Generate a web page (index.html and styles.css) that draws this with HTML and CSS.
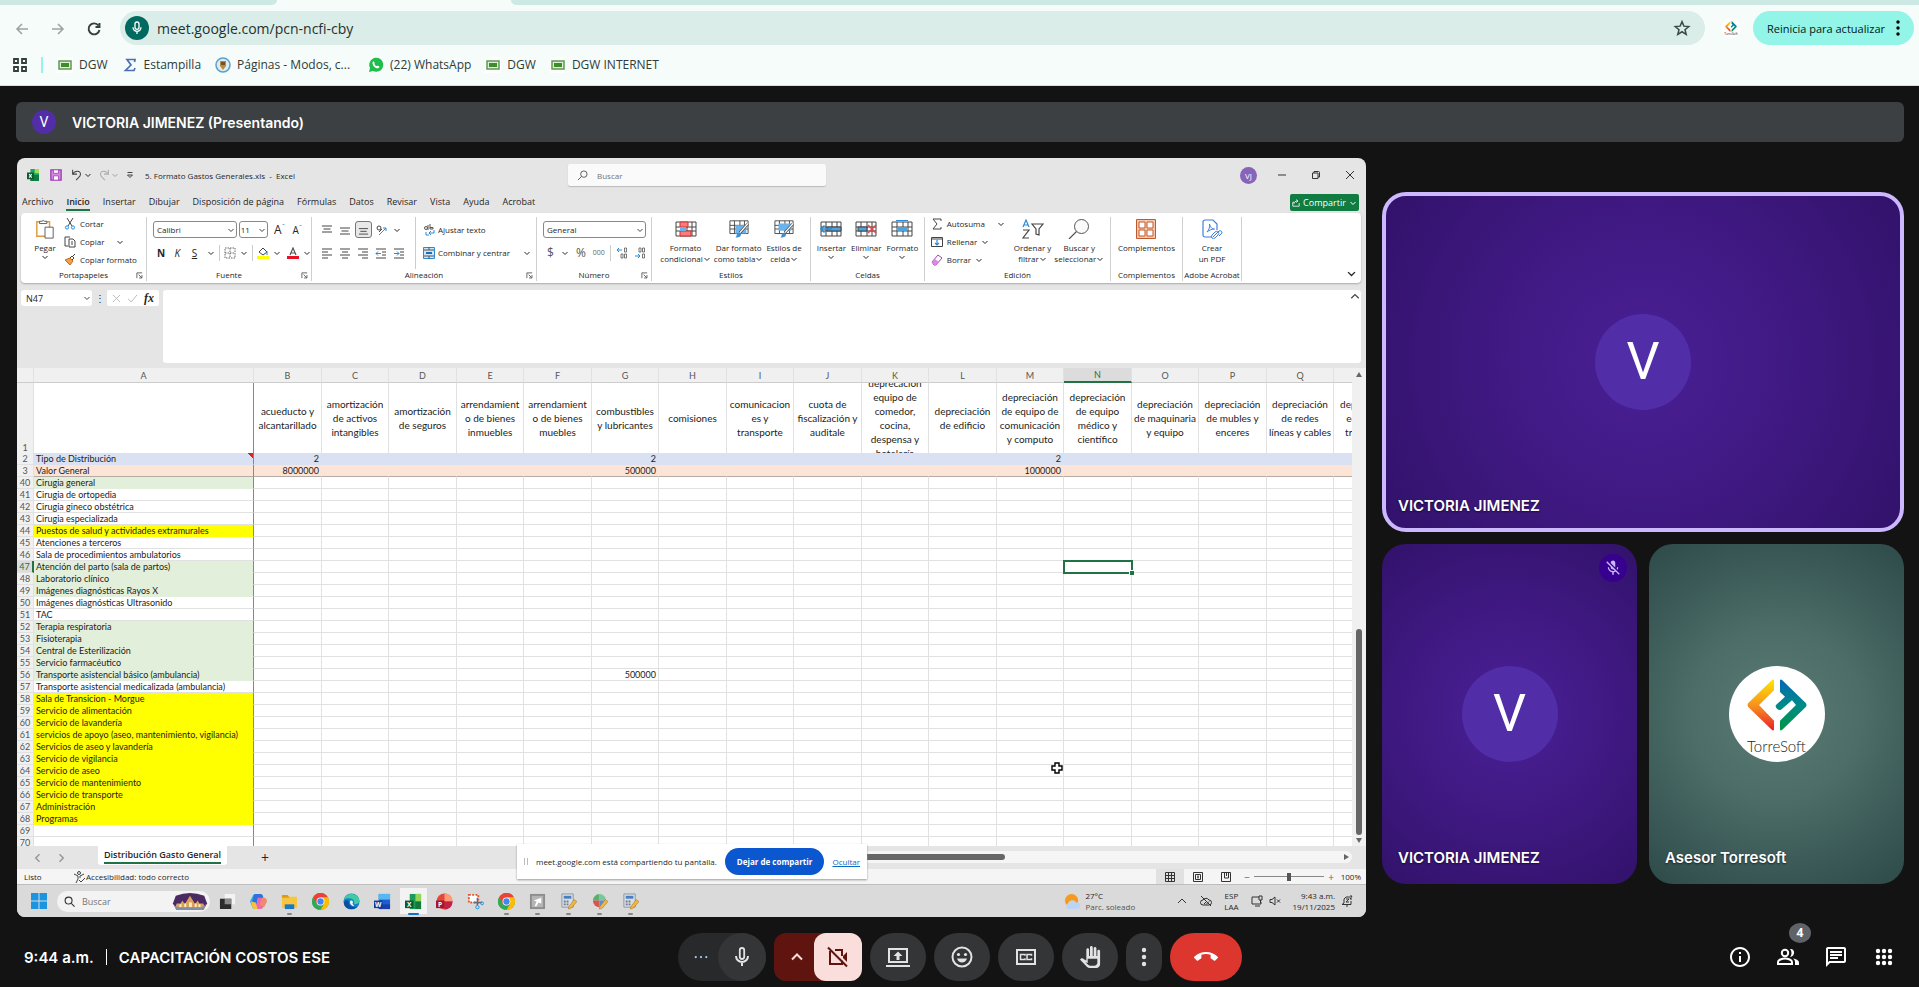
FILE: index.html
```html
<!DOCTYPE html>
<html lang="es">
<head>
  <meta charset="UTF-8">
  <meta name="viewport" content="width=device-width, initial-scale=1.0">
  <title>Meet - CAPACITACIÓN COSTOS ESE</title>
  <link rel="stylesheet" href="styles.css">
</head>
<body>
  <!-- Shared icons -->
  <svg class="sprite" aria-hidden="true">
    <symbol id="chev" viewBox="0 0 8 8"><path d="M1.500 3l2.500 2.500L6.500 3" fill="none" stroke="currentColor" stroke-width="1"/></symbol>
    <symbol id="launch" viewBox="0 0 8 8"><path d="M1 7V1h6M3 3l3.500 3.500M6.800 3.500v3.300H3.500" fill="none" stroke="#555" stroke-width="1"/></symbol>
    <symbol id="dgw" viewBox="0 0 16 16"><path fill="#fff" d="M0 0h16v16H0z"/><path d="M2 4h12v8H2z" fill="#dfeeda" stroke="#5c9a4c" stroke-width="1.500"/><path fill="#3f8a2f" d="M4 6h8v4H4z"/></symbol>
    <symbol id="chrome" viewBox="0 0 24 24"><circle cx="12" cy="12" r="12" fill="#34a853"/><path d="M12 12L1.600 6A12 12 0 0 1 22.400 6z" fill="#ea4335"/><path d="M12 6h10.400A12 12 0 0 1 12 24l5.200-9z" fill="#fbbc04"/><path d="M1.600 6L6.800 15l5.200-3V6z" fill="#ea4335"/><path d="M1.600 6l5.200 9 5.200 3-2 5.900A12 12 0 0 1 1.600 6z" fill="#34a853"/><circle cx="12" cy="12" r="5.600" fill="#fff"/><circle cx="12" cy="12" r="4.500" fill="#4285f4"/></symbol>
    <symbol id="torre" viewBox="0 0 60 56" preserveAspectRatio="none"><path d="M27 2q0-2-2-1L1 26q-1 2 0 4l24 25q2 1 2-1V45L12 28l15-16z" fill="url(#warm)"/><path d="M33 2q0-2 2-1l24 25q1 2 0 4L35 55q-2 1-2-1V45l16-17-4-5-11 10q-2 1-4-1-2-2-1-4l9-9-5-5z" fill="url(#cool)"/></symbol>
    <symbol id="sheetpen" viewBox="0 0 18 18"><path d="M2 1h12v14H2z" fill="#d9dde2" stroke="#8a97a8"/><path d="M4 3h8v3H4z" fill="#4a7ec2"/><path d="M4 8h2v2H4zm3 0h2v2H7zm-3 3h2v2H4zm3 0h2v2H7z" fill="#6f7d8e"/><path d="M9 15l6-8 3 2-6 7-3 1z" fill="#f0b740" stroke="#a9781d" stroke-width=".6"/></symbol>
    <symbol id="cells" viewBox="0 0 22 18"><path d="M1 2h20v14H1zM1 7h20M1 11h20M6 2v14M12 2v14M17 2v14" fill="#fff" stroke="#444" stroke-width="1"/></symbol>
    <linearGradient id="warm" x1="0" y1="0" x2="0" y2="1"><stop offset="0" stop-color="#ffe600"/><stop offset=".5" stop-color="#f7931e"/><stop offset="1" stop-color="#e9202b"/></linearGradient>
    <linearGradient id="cool" x1="0" y1="0" x2="0" y2="1"><stop offset="0" stop-color="#0068b5"/><stop offset=".5" stop-color="#008a8a"/><stop offset="1" stop-color="#00963f"/></linearGradient>
  </svg>

  <header class="browser">
    <div class="tab-strip"><span class="tab-left"></span><span class="tab-active"></span><span class="tab-right"></span></div>
    <div class="toolbar">
      <button class="nav-btn dim" aria-label="Atrás"><svg viewBox="0 0 16 16"><path d="M14 8H3M8 3L3 8l5 5"/></svg></button>
      <button class="nav-btn dim" aria-label="Adelante"><svg viewBox="0 0 16 16"><path d="M2 8h11M8 3l5 5-5 5"/></svg></button>
      <button class="nav-btn last" aria-label="Recargar"><svg viewBox="0 0 16 16"><path d="M12.500 4.500A5.500 5.500 0 1 0 13.500 9M13.500 2v4H9.500" stroke-width="1.900"/></svg></button>
      <div class="address">
        <span class="mic-chip"><svg viewBox="0 0 24 24"><rect x="9" y="3" width="6" height="11" rx="3"/><path d="M6 11a6 6 0 0 0 12 0M12 17v4"/></svg></span>
        <input type="text" aria-label="Dirección" value="meet.google.com/pcn-ncfi-cby">
        <button class="star" aria-label="Marcador"><svg viewBox="0 0 24 24"><path d="M12 3.500l2.500 6 6.500.5-5 4.200 1.600 6.300L12 17l-5.600 3.500L8 14.200 3 10l6.500-.5z" fill="none" stroke="#3b4a47" stroke-width="2"/></svg></button>
      </div>
      <span class="profile"><svg viewBox="0 0 60 56"><use href="#torre"/></svg><small>TorreSoft</small></span>
      <button class="update-btn">Reinicia para actualizar
        <svg viewBox="0 0 4 16"><circle cx="2" cy="2" r="1.700"/><circle cx="2" cy="8" r="1.700"/><circle cx="2" cy="14" r="1.700"/></svg>
      </button>
    </div>
    <nav class="bookmarks">
      <svg class="apps" viewBox="0 0 14 14"><path d="M1 1h4v4H1zM9 1h4v4H9zM1 9h4v4H1zM9 9h4v4H9z" fill="none" stroke="#333f3d" stroke-width="1.800"/></svg>
      <span class="divider"></span>
      <a href="#"><svg><use href="#dgw"/></svg>DGW</a>
      <a href="#"><svg viewBox="0 0 16 16"><path d="M12.500 5L13 2.500H5L9 8l-5.500 5.500h8.500l1-2.500" fill="none" stroke="#4a6fb5" stroke-width="1.700"/></svg>Estampilla</a>
      <a href="#"><svg viewBox="0 0 16 16"><circle cx="8" cy="8" r="7" fill="#dcecf5" stroke="#5b9fcb" stroke-width="1.500"/><path d="M5 4h6v5l-3 4-3-4z" fill="#b98a3a"/><path d="M6 5h4v3H6z" fill="#6f5424"/></svg>Páginas - Modos, c...</a>
      <a href="#" class="wide"><svg viewBox="0 0 16 16"><path d="M1 15l1-4a7 7 0 1 1 3 3z" fill="#1fbe4c"/><path d="M5 4.500c2 0 1.500 2 1.500 2.500s1.500 2.500 2.500 2c.8-.5 1.500-.5 2.500.8-1 2.400-3.500 1.600-5 .2S3.800 5.500 5 4.500z" fill="#fff"/></svg>(22) WhatsApp</a>
      <a href="#"><svg><use href="#dgw"/></svg>DGW</a>
      <a href="#"><svg><use href="#dgw"/></svg>DGW INTERNET</a>
    </nav>
  </header>

  <main class="meet">
    <div class="presenter"><span class="mini-avatar">V</span>VICTORIA JIMENEZ (Presentando)</div>

    <div class="stage">
      <section class="share">
        <!-- Excel title bar -->
        <div class="xl-title">
          <div class="quick">
            <svg class="i12" viewBox="0 0 14 14"><path d="M4 0h10v14H4z" fill="#21a366"/><path d="M9 0h5v5H9z" fill="#9be05c"/><path d="M4 7h10v7H4z" fill="#107c41"/><path d="M0 4h8v8H0z" fill="#0b5c30"/><path d="M2.500 6l3 4M5.500 6l-3 4" stroke="#fff" stroke-width="1.200"/></svg>
            <svg class="i12 save" viewBox="0 0 14 14"><path d="M1 1h12v12H1z" fill="#d58be0" stroke="#a33fb5" stroke-width="1.600"/><path d="M4 1h6v4H4zM4 8h6v5H4z" fill="#fff" stroke="#a33fb5"/></svg>
            <svg class="i14" viewBox="0 0 16 16"><path d="M3 2v5h5M3 7c2-4 9-5 9 0 0 3-3 4-5 7" fill="none" stroke="#444" stroke-width="1.200"/></svg>
            <svg class="i8"><use href="#chev"/></svg>
            <svg class="i14 faded redo" viewBox="0 0 16 16"><path d="M13 2v5H8M13 7C11 3 4 2 4 7c0 3 3 4 5 7" fill="none" stroke="#444" stroke-width="1.200"/></svg>
            <svg class="i8 faded"><use href="#chev"/></svg>
            <svg class="i8 drop" viewBox="0 0 8 8"><path d="M1.500 1.500h5M1.500 4L4 6.500 6.500 4z" fill="none" stroke="#444"/></svg>
            <span>5. Formato Gastos Generales.xls &nbsp;-&nbsp; Excel</span>
          </div>
          <label class="xl-search"><svg viewBox="0 0 12 12"><circle cx="7.500" cy="4.500" r="3.500"/><path d="M5 7l-4 4"/></svg><input type="text" placeholder="Buscar" aria-label="Buscar en Excel"></label>
          <div class="win-btns">
            <span class="vj">VJ</span>
            <button aria-label="Minimizar"><svg viewBox="0 0 10 10"><path d="M1 5h8"/></svg></button>
            <button aria-label="Restaurar"><svg viewBox="0 0 10 10"><path d="M1.500 3h5.500v5.500H1.500zM3 3V1.500h4.500c.6 0 1 .4 1 1V7H7"/></svg></button>
            <button aria-label="Cerrar"><svg viewBox="0 0 10 10"><path d="M1 1l8 8M9 1L1 9"/></svg></button>
          </div>
        </div>

        <nav class="xl-tabs">
          <a href="#">Archivo</a><a href="#" class="on">Inicio</a><a href="#">Insertar</a><a href="#">Dibujar</a><a href="#">Disposición de página</a><a href="#">Fórmulas</a><a href="#">Datos</a><a href="#">Revisar</a><a href="#">Vista</a><a href="#">Ayuda</a><a href="#">Acrobat</a>
          <button class="share-btn"><svg viewBox="0 0 10 10"><path d="M3 4H1v5h8V5M2.500 6c0-2 2-3.500 4-3.500M5 .8l2.500 1.700L5.500 4.500" fill="none" stroke="#fff"/></svg>Compartir<svg><use href="#chev"/></svg></button>
        </nav>

        <!-- Ribbon -->
        <div class="ribbon">
          <div class="group g-clip">
            <div class="body">
              <button class="big"><svg viewBox="0 0 20 22"><path d="M1 3h14v16H1z" fill="#fff" stroke="#dc9b3d" stroke-width="1.600"/><path d="M4 5V2.500h2.500a2 2 0 0 1 3 0H12V5z" fill="#fff" stroke="#555"/><path d="M10 9h9v12h-9z" fill="#fff" stroke="#555"/></svg>Pegar<svg class="i8"><use href="#chev"/></svg></button>
              <div class="lines">
                <button><svg class="i12" viewBox="0 0 12 12"><path d="M3 0l5 8M9 0L4 8" stroke="#444" fill="none"/><circle cx="3" cy="9.500" r="1.600" fill="none" stroke="#2b8bd6"/><circle cx="9" cy="9.500" r="1.600" fill="none" stroke="#2b8bd6"/></svg>Cortar</button>
                <button><svg class="i12" viewBox="0 0 12 12"><path d="M4 10H1V1h5M5 3h4l2 2v6H5zM7 6h2M7 8h2" stroke="#444" fill="none"/></svg>Copiar<svg class="i8 push"><use href="#chev"/></svg></button>
                <button><svg class="i12" viewBox="0 0 12 12"><path d="M1 6l5-2 3 3-3 4z" fill="#f0a04b" stroke="#c96a12"/><path d="M6 4l2-2 2 2-2 2M9 2l2-2" stroke="#444" fill="none"/></svg>Copiar formato</button>
              </div>
            </div>
            <div class="cap">Portapapeles<svg><use href="#launch"/></svg></div>
          </div>

          <div class="group g-font">
            <div class="body rows">
              <div class="row">
                <select class="w86" aria-label="Fuente"><option>Calibri</option></select>
                <select class="w30" aria-label="Tamaño"><option>11</option></select>
                <span class="fmt big-a">A<sup>ˆ</sup></span><span class="fmt">A<sup>ˇ</sup></span>
              </div>
              <div class="row marks">
                <b>N</b><i>K</i><u>S</u><svg class="i8"><use href="#chev"/></svg><span class="vr"></span>
                <svg class="i12" viewBox="0 0 12 12"><path d="M1 1h10v10H1zM6 1v10M1 6h10" fill="none" stroke="#666" stroke-dasharray="1.500 1"/></svg><svg class="i8"><use href="#chev"/></svg><span class="vr"></span>
                <svg class="i12" viewBox="0 0 12 12"><path d="M2 5l4-4 4 4-4 3z" fill="#fff" stroke="#444"/><path d="M10 4v4" stroke="#2b8bd6"/><path d="M0 9h12v3H0z" fill="#ff0"/></svg><svg class="i8"><use href="#chev"/></svg>
                <svg class="i12" viewBox="0 0 12 12"><path d="M3 8l3-7 3 7M4 6h4" fill="none" stroke="#555" stroke-width="1.200"/><path d="M0 9h12v3H0z" fill="#e81123"/></svg><svg class="i8"><use href="#chev"/></svg>
              </div>
            </div>
            <div class="cap">Fuente<svg><use href="#launch"/></svg></div>
          </div>

          <div class="group g-align">
            <div class="body">
              <div class="rows">
                <div class="row icons">
                  <svg viewBox="0 0 12 12"><path d="M1 2h10M2.500 5h7M1 8h10"/></svg><svg viewBox="0 0 12 12"><path d="M1 4h10M2.500 7h7M1 10h10"/></svg><svg class="boxed" viewBox="0 0 12 12"><path d="M1 5h10M2.500 8h7M1 11h10"/></svg>
                  <svg viewBox="0 0 12 12"><circle cx="4" cy="4" r="2"/><path d="M4 8l3-3"/><path d="M4 11l7-7M8 4h3v3" class="blue"/></svg><svg class="i8"><use href="#chev"/></svg>
                </div>
                <div class="row icons">
                  <svg viewBox="0 0 12 12"><path d="M1 2h10M1 5h6M1 8h10M1 11h6"/></svg><svg viewBox="0 0 12 12"><path d="M1 2h10M3 5h6M1 8h10M3 11h6"/></svg><svg viewBox="0 0 12 12"><path d="M1 2h10M5 5h6M1 8h10M5 11h6"/></svg>
                  <svg viewBox="0 0 12 12"><path d="M1 2h10M7 5h4M7 8h4M1 11h10"/><path d="M6 6.500H1M3 4.500l-2 2 2 2" class="blue"/></svg><svg viewBox="0 0 12 12"><path d="M1 2h10M7 5h4M7 8h4M1 11h10"/><path d="M1 6.500h5M4 4.500l2 2-2 2" class="blue"/></svg>
                </div>
              </div>
              <div class="rows wrap-col">
                <button><svg class="i12" viewBox="0 0 12 12"><circle cx="3" cy="4" r="1.500" fill="none" stroke="#555"/><path d="M5 1v5M7 0v5M7 3.500h3V5H7" fill="none" stroke="#555"/><path d="M3 8v3h3M11 6v3H6M8 7L6 9l2 2" fill="none" stroke="#2b8bd6"/></svg>Ajustar texto</button>
                <button><svg class="i12" viewBox="0 0 12 12"><path d="M.5.500h11v11H.5z" fill="#cfe6f8" stroke="#2b8bd6"/><path d="M1 3h10M1 9h10M6 0v3M6 9v3" stroke="#555"/><path d="M3 6h6" stroke="#176fb8" stroke-width="2"/></svg>Combinar y centrar<svg class="i8 push"><use href="#chev"/></svg></button>
              </div>
            </div>
            <div class="cap">Alineación<svg><use href="#launch"/></svg></div>
          </div>

          <div class="group g-num">
            <div class="body rows">
              <div class="row"><select class="w103" aria-label="Formato de número"><option>General</option></select></div>
              <div class="row nums">
                <span class="sym">$</span><svg class="i8"><use href="#chev"/></svg><span class="sym">%</span><span class="zeros">000</span><span class="vr"></span>
                <svg class="i12" viewBox="0 0 12 12"><path d="M6 3H1M3 1L1 3l2 2" fill="none" stroke="#2b8bd6"/><path d="M8.500 1h2v4h-2zM5 7h2v4H5zM8.500 7h2v4h-2z" fill="none" stroke="#555" stroke-width=".8"/></svg>
                <svg class="i12" viewBox="0 0 12 12"><path d="M1 9h5M4 7l2 2-2 2" fill="none" stroke="#2b8bd6"/><path d="M5 1h2v4H5zM8.500 1h2v4h-2zM8.500 7h2v4h-2z" fill="none" stroke="#555" stroke-width=".8"/></svg>
              </div>
            </div>
            <div class="cap">Número<svg><use href="#launch"/></svg></div>
          </div>

          <div class="group g-style">
            <div class="body">
              <button class="big"><svg viewBox="0 0 22 18"><use href="#cells"/><path d="M5 2h8v5H5zM5 11h11v5H5z" fill="#ff7a7a" stroke="#c33"/><path d="M5 7h6v4H5z" fill="#6bb3ea"/></svg>Formato<span>condicional<svg class="i8"><use href="#chev"/></svg></span></button>
              <button class="big"><svg viewBox="0 0 22 22"><use href="#cells" height="18"/><path d="M7 7h12v9H7z" fill="#6bb3ea"/><path d="M21 5l-9 10" stroke="#444" stroke-width="3"/><path d="M21 5l-9 10" stroke="#fff" stroke-width="1.500"/><path d="M7 20c4 1 7-1 6-4l-3-1c-2 1-1 4-3 5z" fill="#3f8fd0"/></svg>Dar formato<span>como tabla<svg class="i8"><use href="#chev"/></svg></span></button>
              <button class="big"><svg viewBox="0 0 22 22"><use href="#cells" height="18"/><path d="M5 5h14v8H5z" fill="#6bb3ea"/><path d="M21 5l-9 10" stroke="#444" stroke-width="3"/><path d="M21 5l-9 10" stroke="#fff" stroke-width="1.500"/><path d="M7 20c4 1 7-1 6-4l-3-1c-2 1-1 4-3 5z" fill="#3f8fd0"/></svg>Estilos de<span>celda<svg class="i8"><use href="#chev"/></svg></span></button>
            </div>
            <div class="cap">Estilos</div>
          </div>

          <div class="group g-cell">
            <div class="body">
              <button class="big"><svg viewBox="0 0 22 18"><use href="#cells"/><path d="M7 7h14v4H7z" fill="#4da3e0" stroke="#444"/><path d="M12 9H1M4.500 5.500L1 9l3.500 3.500" fill="none" stroke="#2b8bd6" stroke-width="1.500"/></svg>Insertar<svg class="i8"><use href="#chev"/></svg></button>
              <button class="big"><svg viewBox="0 0 22 18"><use href="#cells"/><path d="M3 7h9v4H3z" fill="#4da3e0" stroke="#444"/><path d="M13 5l8 8M21 5l-8 8" stroke="#e0474c" stroke-width="1.600"/></svg>Eliminar<svg class="i8"><use href="#chev"/></svg></button>
              <button class="big"><svg viewBox="0 0 22 18"><use href="#cells"/><path d="M6 7h10v4H6z" fill="#4da3e0"/><path d="M5 .5h12" stroke="#2b8bd6"/></svg>Formato<svg class="i8"><use href="#chev"/></svg></button>
            </div>
            <div class="cap">Celdas</div>
          </div>

          <div class="group g-edit">
            <div class="body">
              <div class="lines">
                <button><svg class="i12" viewBox="0 0 12 12"><path d="M10 3V1H2l4 5-4 5h8V9" fill="none" stroke="#444"/></svg>Autosuma<svg class="i8 push"><use href="#chev"/></svg></button>
                <button><svg class="i12" viewBox="0 0 12 12"><path d="M.5 1.500h11v9H.5zM.5 3h11" fill="none" stroke="#444"/><path d="M6 4v5M4 7l2 2 2-2" fill="none" stroke="#2b8bd6" stroke-width="1.200"/></svg>Rellenar<svg class="i8"><use href="#chev"/></svg></button>
                <button><svg class="i12" viewBox="0 0 12 12"><path d="M1 8l6-7 4 3-6 7H3z" fill="#fff" stroke="#a33fb5"/><path d="M1 8l3-3 4 3-3 3H3z" fill="#d58be0"/></svg>Borrar<svg class="i8"><use href="#chev"/></svg></button>
              </div>
              <button class="big"><svg viewBox="0 0 22 20"><path d="M1 8l3-7 3 7M2 6h4" fill="none" stroke="#2b8bd6" stroke-width="1.200"/><path d="M1 11h6l-6 8h6M10 5h11l-4 5v6l-3-1v-5z" fill="none" stroke="#444" stroke-width="1.200"/></svg>Ordenar y<span>filtrar<svg class="i8"><use href="#chev"/></svg></span></button>
              <button class="big"><svg viewBox="0 0 22 20"><circle cx="13.500" cy="7.500" r="7" fill="#fafafa" stroke="#555"/><path d="M8.500 12.500L1 20" stroke="#555" stroke-width="1.200"/></svg>Buscar y<span>seleccionar<svg class="i8"><use href="#chev"/></svg></span></button>
            </div>
            <div class="cap">Edición</div>
          </div>

          <div class="group g-add">
            <div class="body"><button class="big"><svg viewBox="0 0 22 20"><path d="M1.500.5h19v19h-19z" fill="#f8c9b0" stroke="#c2582c"/><path d="M4 3h6v6H4zM12 3h6v6h-6zM4 11h6v6H4zM12 11h6v6h-6z" fill="#fff" stroke="#c2582c"/></svg>Complementos</button></div>
            <div class="cap">Complementos</div>
          </div>

          <div class="group g-pdf">
            <div class="body"><button class="big"><svg viewBox="0 0 22 20"><path d="M11 18H4a2 2 0 0 1-2-2V3a2 2 0 0 1 2-2h8l4 4v6" fill="none" stroke="#3f7fe0" stroke-width="1.200"/><path d="M6 13c2-2 3-5 2.500-8 1 4 3 5 5 5-3 0-5 1-7.500 3zM12 18l6-6M11 16l3-3a2 2 0 0 1 3 3l-3 3a2 2 0 0 1-3-3M16 14l2-2a2 2 0 0 1 3 2l-3 3" fill="none" stroke="#3f7fe0"/></svg>Crear<span>un PDF</span></button></div>
            <div class="cap">Adobe Acrobat</div>
          </div>
          <button class="collapse" aria-label="Contraer la cinta"><svg><use href="#chev"/></svg></button>
        </div>

        <!-- Formula bar -->
        <div class="formula">
          <select class="name-box" aria-label="Cuadro de nombres"><option>N47</option></select>
          <span class="dots">⋮</span>
          <div class="fx"><svg viewBox="0 0 10 10"><path d="M1 1l8 8M9 1L1 9"/></svg><svg viewBox="0 0 10 10"><path d="M0 5l3.500 4L10 1"/></svg><em>fx</em></div>
          <div class="entry"><textarea aria-label="Barra de fórmulas"></textarea><svg class="i12" viewBox="0 0 8 8"><path d="M1.500 5.500L4 3l2.500 2.500" fill="none" stroke="#444" stroke-width=".8"/></svg></div>
        </div>

        <!-- Sheet -->
        <div class="sheet">
          <div class="sheet-view"><table id="grid"></table>
            <svg class="cursor" viewBox="0 0 12 12"><path d="M4 1h4v3h3v4H8v3H4V8H1V4h3z" fill="#fff" stroke="#000" stroke-width="1.400"/></svg>
          </div>
          <div class="vscroll"><span class="up"></span><span class="vthumb"></span><span class="down"></span></div>
        </div>

        <div class="sheet-tabs">
          <svg class="i12 first" viewBox="0 0 8 8"><path d="M5 1.500L2.500 4 5 6.500" fill="none" stroke="#999"/></svg>
          <svg class="i12" viewBox="0 0 8 8"><path d="M3 1.500L5.500 4 3 6.500" fill="none" stroke="#999"/></svg>
          <button class="sheet-tab"><span>Distribución Gasto General</span></button>
          <button class="add-sheet" aria-label="Hoja nueva">+</button>
          <div class="hscroll"><span class="hthumb"></span><span class="right"></span></div>
        </div>

        <div class="status">
          <span class="ready">Listo</span>
          <svg class="i12" viewBox="0 0 12 12"><circle cx="6" cy="2" r="1.500" fill="none" stroke="#444"/><path d="M1 3l4 2v3l-2 4M11 3L7 5v2M6 9l2 2 4-4" fill="none" stroke="#444"/></svg>
          <span>Accesibilidad: todo correcto</span>
          <div class="views">
            <button class="on" aria-label="Normal"><svg viewBox="0 0 10 10"><path d="M.5.500h9v9h-9zM3.500 0v10M6.500 0v10M0 3.500h10M0 6.500h10"/></svg></button>
            <button aria-label="Diseño de página"><svg viewBox="0 0 10 10"><path d="M.5.500h9v9h-9zM2.500 2.500h5v5h-5zM4 4.200h2M4 5.800h2"/></svg></button>
            <button aria-label="Saltos de página"><svg viewBox="0 0 10 10"><path d="M.5.500h9v9h-9zM3.500 0v6h4V0M5.500 0v4"/></svg></button>
          </div>
          <span class="sign">−</span><input type="range" aria-label="Zoom" min="0" max="200" value="100"><span class="sign">+</span><span class="pct">100%</span>
        </div>

        <!-- Windows taskbar -->
        <div class="taskbar">
          <svg class="start" viewBox="0 0 16 16"><path d="M0 0h7.500v7.500H0zM8.500 0H16v7.500H8.500zM0 8.500h7.500V16H0zM8.500 8.500H16V16H8.500z" fill="#1b95e0"/></svg>
          <label class="tb-search"><svg viewBox="0 0 12 12"><circle cx="5" cy="5" r="3.800"/><path d="M8 8l3.500 3.500"/></svg><input type="text" placeholder="Buscar" aria-label="Buscar en Windows">
            <svg class="castle" viewBox="0 0 36 20"><path d="M3 4q15-6 30 0l3 8-4 7H4l-4-7z" fill="#4b2a63"/><path d="M2 17l2-5h4l2-3 2 3h1l5-8 5 8h1l2-3 2 3h4l2 5-5 2H6z" fill="#dba05c"/><path d="M12 16v-4h2v4zm5 0v-5h3v5zm6 0v-4h2v4zM7 16v-3h2v3zm20 0v-3h2v3z" fill="#fff0bd"/><path d="M1 14l5 2h24l5-3-3 6H4z" fill="#7f8fa8"/></svg>
          </label>
          <ul class="apps-row">
            <li><svg viewBox="0 0 18 18"><path d="M6 1h11v11H6z" fill="#f3f3f3"/><path d="M1 6h12v11H1z" fill="#2b2b2b"/><path d="M6 6h7v6H6z" fill="#8a8a8a"/></svg></li>
            <li><svg viewBox="0 0 18 18"><path d="M5 1h6q2 0 2.500 2L15 7l-3 8q-1 2-3 2H5q-2 0-2.500-2L0 9l3-6q.5-2 2-2z" fill="#2aa5e8"/><path d="M6 1h5q2 0 2.500 2l.5 2-4 1-3 6-5-1 2-8q.5-2 2-2z" fill="#2f6fe0"/><path d="M8 5l6 0 3 4-3 6q-1 2-3 2H7l-2-4 2-2z" fill="#e86bb1"/><path d="M1 9l5 1 2 7H5q-2 0-2.500-2z" fill="#f2c43a"/><path d="M13 5h3q2 1 2 4l-3 6-5-2z" fill="#f08a6b"/></svg></li>
            <li class="run"><svg viewBox="0 0 18 18"><path d="M1 2h6l2 2h8v12H1z" fill="#f7c640"/><path d="M1 2h6l2 3H1z" fill="#dc9a1b"/><path d="M4 12h10v5H4z" fill="#1b78c8"/></svg></li>
            <li><svg><use href="#chrome"/></svg></li>
            <li><svg viewBox="0 0 18 18"><circle cx="9" cy="9" r="8.500" fill="#1681cf"/><path d="M1 7C3-1 16-1 17.500 8c0 4-4 4-6 3 2-5-6-7-10.500-4z" fill="#42c9a5"/><path d="M6 9c0 5 5 7 9 5-3 5-14 4-14-4 1-3 5-3 5-1z" fill="#0d4f9e"/><path d="M8 8c-2 3 1 6 4 6l-2-3c1-1 1-3-2-3z" fill="#e9f6ff"/></svg></li>
            <li><svg viewBox="0 0 18 18"><path d="M5 1h12v16H5z" fill="#1b5fd0"/><path d="M5 1h12v6H5z" fill="#56b7f5"/><path d="M5 12h12v5H5z" fill="#1a3fb0"/><path d="M0 8h9v8H0z" fill="#123c93"/><text x="1" y="15" class="tag">W</text></svg></li>
            <li class="run on"><svg viewBox="0 0 18 18"><path d="M5 1h12v16H5z" fill="#1e9b55"/><path d="M11 1h6v8h-6z" fill="#8fd65b"/><path d="M11 9h6v8h-6z" fill="#0f7a3c"/><path d="M0 8h9v8H0z" fill="#0b5c30"/><text x="2" y="15" class="tag">X</text></svg></li>
            <li><svg viewBox="0 0 18 18"><circle cx="9" cy="9" r="8.500" fill="#e3483a"/><path d="M9 .5A8.500 8.500 0 0 1 17.500 9H9z" fill="#ff9a76"/><path d="M17.500 9A8.500 8.500 0 0 1 9 17.500V9z" fill="#c2204a"/><path d="M0 8h9v8H0z" fill="#a3162b"/><text x="2" y="15" class="tag">P</text></svg></li>
            <li><svg viewBox="0 0 18 18"><path d="M2 2h10v8H2z" fill="#fff" stroke="#e0552a" stroke-width="2" stroke-dasharray="2 1.500"/><path d="M11 5v8M7 10h9" stroke="#667" stroke-width="1.600"/><circle cx="11" cy="15" r="1.800" fill="none" stroke="#1b95e0"/><circle cx="16" cy="11" r="1.500" fill="none" stroke="#1b95e0"/></svg></li>
            <li class="run"><svg><use href="#chrome"/></svg></li>
            <li class="run"><svg viewBox="0 0 18 18"><path d="M1 1h16v16H1z" fill="#8d8d8d"/><path d="M3 3h12v12H3z" fill="#b5b5b5"/><path d="M5 8l8-3v6l-3-1-2 4H6l2-5z" fill="#fff"/></svg></li>
            <li class="run"><svg><use href="#sheetpen"/></svg></li>
            <li class="run"><svg viewBox="0 0 18 18"><path d="M2 8a7 7 0 0 1 7-7v7z" fill="#58b368"/><path d="M9 1a7 7 0 0 1 7 7H9z" fill="#7cc4a0"/><path d="M2 8h7v7a7 7 0 0 1-7-7z" fill="#d9534f"/><path d="M9 8h7l-7 7z" fill="#5a8fd8"/><path d="M9 15l6-8 3 2-6 7-3 1z" fill="#f0b740" stroke="#a9781d" stroke-width=".6"/></svg></li>
            <li class="run"><svg><use href="#sheetpen"/></svg></li>
          </ul>
          <div class="weather"><svg viewBox="0 0 18 18"><circle cx="8" cy="8" r="7" fill="#f59a1c"/><path d="M4 17a3.500 3.500 0 0 1 0-6 5 5 0 0 1 9-1 3.500 3.500 0 0 1 1 7z" fill="#bcd5f7"/></svg><p>27°C<br><span>Parc. soleado</span></p></div>
          <div class="tray">
            <svg viewBox="0 0 12 12"><path d="M2 8l4-4 4 4"/></svg>
            <svg viewBox="0 0 12 12"><path d="M3 10h6a2.500 2.500 0 0 0 0-5 3.500 3.500 0 0 0-6 0 2.500 2.500 0 0 0 0 5zM1 1l10 10M4 9l3-3M6 9.500l3-3"/></svg>
            <p>ESP<br>LAA</p>
            <svg viewBox="0 0 12 12"><path d="M8 2H1v7h9V7M4 11h5M8 1h3v4H8zM9.500 5v3"/></svg>
            <svg viewBox="0 0 12 12"><path d="M1 4.500h2l3-2.500v8L3 7.500H1zM8 4.500l3 3M11 4.500l-3 3"/></svg>
            <p class="clock">9:43 a.m.<br>19/11/2025</p>
            <svg viewBox="0 0 12 12"><path d="M9 2H5L3 4v4L1 9.500h9V6M5 11h2M5 4h3L5 7h3M9 1h2L9 4h2"/></svg>
          </div>
        </div>

        <div class="share-notice">
          <span class="grip"></span>
          <span>meet.google.com está compartiendo tu pantalla.</span>
          <button>Dejar de compartir</button>
          <a href="#">Ocultar</a>
        </div>
      </section>

      <aside class="people">
        <div class="tile purple speaking"><span class="avatar">V</span><span class="who">VICTORIA JIMENEZ</span></div>
        <div class="tile purple"><span class="avatar">V</span><span class="who">VICTORIA JIMENEZ</span>
          <span class="muted"><svg viewBox="0 0 24 24"><path d="M19 11h-1.700c0 .74-.16 1.430-.43 2.050l1.230 1.230c.56-.98.9-2.090.9-3.280zm-4.020.17c0-.06.02-.11.02-.17V5c0-1.660-1.340-3-3-3S9 3.340 9 5v.18l5.980 5.990zM4.270 3L3 4.270l6.010 6.010V11c0 1.660 1.330 3 2.990 3 .22 0 .44-.03.65-.08l1.660 1.660c-.71.33-1.500.52-2.310.52-2.760 0-5.300-2.100-5.300-5.100H5c0 3.410 2.720 6.230 6 6.720V21h2v-3.280c.91-.13 1.770-.45 2.540-.9L19.730 21 21 19.730 4.270 3z"/></svg></span>
        </div>
        <div class="tile teal"><span class="avatar logo"><svg viewBox="0 0 60 52"><use href="#torre"/></svg><small>TorreSoft</small></span><span class="who">Asesor Torresoft</span></div>
      </aside>
    </div>

    <footer class="controls">
      <div class="info"><span>9:44 a.m.</span><span class="bar"></span><span>CAPACITACIÓN COSTOS ESE</span></div>
      <div class="center">
        <div class="split mic"><button class="opt" aria-label="Opciones de audio"><svg viewBox="0 0 24 24"><circle cx="5" cy="12" r="1.500"/><circle cx="12" cy="12" r="1.500"/><circle cx="19" cy="12" r="1.500"/></svg></button><button class="main" aria-label="Micrófono"><svg viewBox="0 0 24 24"><rect x="9.800" y="3" width="4.400" height="11" rx="2.200" fill="none" stroke="#e3e3e3" stroke-width="1.800"/><path d="M6 11a6 6 0 0 0 12 0M12 17v4" fill="none" stroke="#e3e3e3" stroke-width="2"/></svg></button></div>
        <div class="split cam"><button class="opt" aria-label="Opciones de video"><svg viewBox="0 0 24 24"><path d="M7 14.500l5-5 5 5" fill="none" stroke="#f9dedc" stroke-width="2"/></svg></button><button class="main" aria-label="Cámara"><svg viewBox="0 0 24 24"><path d="M9 5h7v6M16 15.500V19H4V6M2 2.500l19 19" fill="none" stroke="#601410" stroke-width="2"/><path d="M17 11l4-4v10l-4-4z" fill="#601410"/></svg></button></div>
        <button aria-label="Presentar"><svg viewBox="0 0 24 24"><path d="M3 4h18v13H3z" fill="none" stroke="#e3e3e3" stroke-width="2"/><path d="M0 20h24v2H0zM12 6.500l4.500 4.500h-3v4h-3v-4h-3z"/></svg></button>
        <button aria-label="Reacciones"><svg viewBox="0 0 24 24"><circle cx="12" cy="12" r="9.500" fill="none" stroke="#e3e3e3" stroke-width="2"/><circle cx="8.500" cy="9.500" r="1.600"/><circle cx="15.500" cy="9.500" r="1.600"/><path d="M7 13.500h10c-.8 2.500-2.700 4-5 4s-4.200-1.500-5-4z"/></svg></button>
        <button aria-label="Subtítulos"><svg viewBox="0 0 24 24"><path d="M3 5h18v14H3z" fill="none" stroke="#e3e3e3" stroke-width="2"/><path d="M11 10.800V9.500H6.500v5H11v-1.300M17.500 10.800V9.500H13v5h4.500v-1.300" fill="none" stroke="#e3e3e3" stroke-width="1.500"/></svg></button>
        <button class="hand" aria-label="Levantar la mano"><svg viewBox="0 0 24 24"><path d="M23 5.500V20c0 2.200-1.800 4-4 4h-7.300c-1.080 0-2.100-.43-2.850-1.190L1 14.830s1.260-1.230 1.300-1.250c.22-.19.49-.29.79-.29.22 0 .42.060.6.160.040.010 4.310 2.460 4.310 2.460V4c0-.83.67-1.500 1.500-1.500S11 3.170 11 4v7h1V1.500c0-.83.67-1.500 1.500-1.500S15 .67 15 1.500V11h1V2.500c0-.83.67-1.500 1.500-1.500s1.500.67 1.500 1.500V11h1V5.500c0-.83.67-1.500 1.500-1.500s1.500.67 1.500 1.500z"/><path d="M9.500 14h10.500v5q-1 2.500-3.500 2.500h-4q-1.500 0-2.500-1L7 17.800l2.500.7z" fill="#333537"/></svg></button>
        <button class="more" aria-label="Más opciones"><svg viewBox="0 0 24 24"><circle cx="12" cy="5" r="2.200"/><circle cx="12" cy="12" r="2.200"/><circle cx="12" cy="19" r="2.200"/></svg></button>
        <button class="hangup" aria-label="Salir"><svg viewBox="0 0 24 24"><path d="M12 9c-1.600 0-3.150.25-4.600.72v3.100c0 .39-.23.74-.56.9-.98.49-1.870 1.120-2.660 1.850-.18.18-.43.28-.7.28-.28 0-.53-.11-.71-.29L.29 13.080c-.18-.17-.29-.42-.29-.7 0-.28.11-.53.29-.71C3.340 8.780 7.460 7 12 7s8.660 1.780 11.710 4.670c.18.18.29.43.29.71 0 .28-.11.53-.29.71l-2.480 2.480c-.18.18-.43.29-.71.29-.27 0-.52-.11-.7-.28-.79-.74-1.690-1.360-2.670-1.850-.33-.16-.56-.5-.56-.9v-3.100C15.150 9.250 13.600 9 12 9z"/></svg></button>
      </div>
      <div class="side-btns">
        <button aria-label="Detalles"><svg viewBox="0 0 24 24"><path d="M11 7h2v2h-2zm0 4h2v6h-2zm1-9C6.480 2 2 6.480 2 12s4.480 10 10 10 10-4.480 10-10S17.520 2 12 2zm0 18c-4.410 0-8-3.590-8-8s3.590-8 8-8 8 3.590 8 8-3.590 8-8 8z"/></svg></button>
        <button aria-label="Personas"><svg viewBox="0 0 24 24"><circle cx="9" cy="8" r="3.200" fill="none" stroke="#fff" stroke-width="2"/><path d="M2 19v-2c0-2 4-3.500 7-3.500s7 1.500 7 3.500v2z" fill="none" stroke="#fff" stroke-width="2"/><path d="M14 4c5-1 6 7 0 8 2-2 2-6 0-8zM17 13.500c3 .5 6 1.800 6 4V20h-4v-3c0-1.500-.8-2.600-2-3.500z"/></svg><span class="badge">4</span></button>
        <button aria-label="Chat"><svg viewBox="0 0 24 24"><path d="M4 4h16v12H5.170L4 17.170V4m0-2c-1.100 0-1.990.9-1.990 2L2 22l4-4h14c1.100 0 2-.9 2-2V4c0-1.100-.9-2-2-2H4zm2 10h8v2H6v-2zm0-3h12v2H6V9zm0-3h12v2H6V6z"/></svg></button>
        <button aria-label="Actividades"><svg viewBox="0 0 24 24"><circle cx="6" cy="6" r="2.200"/><circle cx="12" cy="6" r="2.200"/><circle cx="18" cy="6" r="2.200"/><circle cx="6" cy="12" r="2.200"/><circle cx="12" cy="12" r="2.200"/><circle cx="18" cy="12" r="2.200"/><circle cx="6" cy="18" r="2.200"/><circle cx="12" cy="18" r="2.200"/><circle cx="18" cy="18" r="2.200"/></svg></button>
      </div>
    </footer>
  </main>

  <script src="script.js"></script>
</body>
</html>
```

FILE: styles.css
```css
* {
  box-sizing: border-box;
}

body {
  margin: 0;
  height: 100vh;
  display: flex;
  flex-direction: column;
  background: #131314;
  font-family: "Open Sans", "Noto Sans", sans-serif;
  overflow: hidden;
}

button {
  border: none;
  background: none;
  padding: 0;
  font-family: inherit;
  font-size: inherit;
  color: inherit;
  cursor: pointer;
}

input, select, textarea {
  border: none;
  outline: none;
  background: none;
  padding: 0;
  font-family: inherit;
  font-size: inherit;
  color: inherit;
}

p {
  margin: 0;
}

a {
  color: inherit;
  text-decoration: none;
}

svg {
  flex: none;
}

.sprite {
  position: absolute;
  width: 0;
  height: 0;
}

.i8 { width: 8px; height: 8px; }
.i12 { width: 12px; height: 12px; }
.i14 { width: 14px; height: 14px; }
.faded { opacity: 0.35; }

/* Browser */
.browser {
  background: #f5fcfa;
  border-bottom: 1px solid #d3e3df;
  height: 86px;
}

.tab-strip {
  display: flex;
  height: 5px;
  background: #f5fcfa;
}

.tab-left, .tab-right {
  background: #cde9e3;
}

.tab-left {
  width: 277px;
  border-bottom-right-radius: 5px;
}

.tab-active {
  width: 234px;
}

.tab-right {
  flex: 1;
  border-bottom-left-radius: 5px;
}

.toolbar {
  display: flex;
  align-items: center;
  height: 46px;
  padding: 0 5px 0 14px;
}

.nav-btn {
  width: 16px;
  height: 16px;
  margin-right: 20px;
  color: #33413e;
}

.nav-btn.last {
  margin-right: 18px;
}

.nav-btn svg {
  width: 16px;
  height: 16px;
  fill: none;
  stroke: currentColor;
  stroke-width: 1.5;
}

.nav-btn.dim {
  color: #9aa3a1;
}

.address {
  flex: 1;
  display: flex;
  align-items: center;
  height: 34px;
  margin-right: 16px;
  padding: 0 14px 0 5px;
  border-radius: 17px;
  background: #dbede8;
}

.address input {
  flex: 1;
  font-size: 14px;
  color: #26302e;
}

.mic-chip {
  display: flex;
  width: 24px;
  height: 24px;
  margin-right: 8px;
  border-radius: 50%;
  background: #006a60;
  align-items: center;
  justify-content: center;
}

.mic-chip svg {
  width: 16px;
  height: 16px;
  fill: none;
  stroke: #fff;
  stroke-width: 2;
}

.star svg {
  display: block;
  width: 18px;
  height: 18px;
}

.profile {
  display: flex;
  flex-direction: column;
  align-items: center;
  justify-content: center;
  width: 20px;
  height: 20px;
  margin-right: 12px;
  border-radius: 50%;
  background: #fff;
  overflow: hidden;
}

.profile svg {
  width: 12px;
  height: 11px;
}

.profile small {
  font-size: 3px;
  line-height: 4px;
}

.update-btn {
  display: flex;
  align-items: center;
  gap: 11px;
  height: 34px;
  padding: 0 14px;
  border-radius: 17px;
  background: #92f5e7;
  font-size: 11px;
  color: #00201c;
}

.update-btn svg {
  width: 4px;
  height: 16px;
}

.bookmarks {
  display: flex;
  align-items: center;
  height: 27px;
  padding-left: 13px;
  gap: 14px;
  font-size: 12px;
  color: #2f3b39;
}

.bookmarks .apps {
  width: 14px;
  height: 14px;
}

.bookmarks .divider {
  width: 2px;
  height: 16px;
  background: #92f5e7;
}

.bookmarks a {
  display: flex;
  align-items: center;
  gap: 6px;
}

.bookmarks .wide {
  margin-left: 4px;
}

.bookmarks a svg {
  width: 16px;
  height: 16px;
}

/* Meet */
.meet {
  flex: 1;
  min-height: 0;
  display: flex;
  flex-direction: column;
  padding-top: 16px;
}

.presenter {
  display: flex;
  align-items: center;
  gap: 16px;
  height: 40px;
  margin: 0 15px 16px 16px;
  padding-left: 16px;
  border-radius: 6px;
  background: #3c4043;
  color: #fff;
  font: 600 14px Inter, "Open Sans", sans-serif;
}

.mini-avatar {
  width: 24px;
  border-radius: 50%;
  background: #512da8;
  font: 14px/24px Roboto, sans-serif;
  text-align: center;
}

.stage {
  flex: 1;
  min-height: 0;
  display: flex;
  gap: 16px;
  padding: 0 15px 0 17px;
}

.share {
  position: relative;
  flex: 1;
  min-width: 0;
  display: flex;
  flex-direction: column;
  border-radius: 8px;
  background: #e5e5e5;
  color: #262626;
  font-size: 8px;
  overflow: hidden;
}

.xl-title {
  display: flex;
  align-items: center;
  height: 34px;
  padding-left: 10px;
}

.quick {
  display: flex;
  align-items: center;
  width: 541px;
}

.quick .save {
  margin: 0 8px 0 11px;
}

.quick .redo {
  margin-left: 5px;
}

.quick .drop {
  margin: 0 11px 0 7px;
}

.xl-search {
  display: flex;
  align-items: center;
  gap: 9px;
  width: 258px;
  height: 22px;
  padding-left: 9px;
  border-radius: 2px;
  background: #fafafa;
  box-shadow: 0 1px 1px #bbb;
}

.xl-search svg {
  width: 11px;
  height: 11px;
  fill: none;
  stroke: #555;
}

.win-btns {
  display: flex;
  align-items: center;
  gap: 24px;
  margin-left: auto;
  padding-right: 11px;
}

.vj {
  width: 17px;
  margin-right: -4px;
  border-radius: 50%;
  background: #8764b8;
  color: #fff;
  font-size: 8px;
  line-height: 17px;
  text-align: center;
}

.win-btns svg {
  display: block;
  width: 10px;
  height: 10px;
  fill: none;
  stroke: #333;
}

.xl-tabs {
  display: flex;
  align-items: center;
  gap: 13px;
  height: 21px;
  padding: 0 7px 0 5px;
  font-size: 9px;
}

.xl-tabs a {
  height: 17px;
  line-height: 16px;
}

.xl-tabs .on {
  font-weight: 600;
  border-bottom: 2px solid #217346;
}

.share-btn {
  display: flex;
  align-items: center;
  justify-content: center;
  gap: 3px;
  width: 69px;
  height: 17px;
  margin-left: auto;
  border-radius: 2px;
  background: #107c41;
  color: #fff;
}

.share-btn svg {
  width: 8px;
  height: 8px;
}

/* Ribbon */
.ribbon {
  display: flex;
  height: 70px;
  margin: 0 5px 7px 4px;
  border-radius: 4px;
  background: #fff;
  box-shadow: 0 1px 2px #aaa;
}

.group {
  display: flex;
  flex-direction: column;
  margin: 4px 0 2px;
  border-right: 1px solid #d0d0d0;
}

.g-clip { width: 126px; }
.g-font { width: 165px; }
.g-align { width: 225px; }
.g-num { width: 115px; }
.g-style { width: 159px; }
.g-cell { width: 114px; }
.g-edit { width: 186px; }
.g-add { width: 72px; }
.g-pdf { width: 59px; }

.group .body {
  height: 52px;
  display: flex;
  justify-content: center;
}

.group .cap {
  position: relative;
  height: 12px;
  line-height: 12px;
  text-align: center;
}

.cap svg {
  position: absolute;
  right: 3px;
  top: 3px;
  width: 7px;
  height: 7px;
}

.big {
  display: flex;
  flex-direction: column;
  align-items: center;
  align-self: flex-start;
  padding-top: 2px;
  line-height: 11px;
}

.big > svg:first-child {
  width: 22px;
  height: 20px;
  margin-bottom: 3px;
}

.big span {
  display: flex;
  align-items: center;
}

.g-clip .body {
  justify-content: flex-start;
  padding-left: 13px;
  gap: 8px;
}

.lines {
  display: flex;
  flex-direction: column;
  margin-top: -2px;
}

.lines button {
  display: flex;
  align-items: center;
  gap: 4px;
  height: 18px;
  line-height: 18px;
}

.lines .push {
  margin-left: 8px;
}

.group .rows {
  display: flex;
  flex-direction: column;
  justify-content: flex-start;
  gap: 4px;
  padding-top: 3px;
}

.group .row {
  display: flex;
  align-items: center;
  height: 19px;
}

.g-font .body,
.g-num .body {
  padding-left: 6px;
}

select {
  appearance: none;
  height: 17px;
  padding: 0 3px;
  border: 1px solid #888;
  border-radius: 3px;
  background: #fff url("data:image/svg+xml,%3Csvg xmlns='http://www.w3.org/2000/svg' width='8' height='8'%3E%3Cpath d='M1.5 3l2.5 2.5L6.5 3' fill='none' stroke='%23444'/%3E%3C/svg%3E") no-repeat right 1px center;
}

.w86 { width: 86px; margin-right: 2px; }
.w30 { width: 30px; margin-right: 6px; padding: 0 1px; }
.w103 { width: 103px; }

.fmt {
  width: 19px;
  font-size: 10px;
  line-height: 14px;
}

.fmt.big-a {
  font-size: 12px;
}

.fmt sup {
  font-size: 8px;
  color: #2b8bd6;
  line-height: 0;
}

.marks {
  gap: 6px;
  padding-left: 4px;
  font-size: 10px;
}

.marks b,
.marks i,
.marks u {
  width: 12px;
}

.marks .vr,
.nums .vr {
  width: 1px;
  height: 16px;
  margin: 0 -2px;
  background: #ccc;
}

.marks .i8 {
  margin-left: -2px;
}

.g-align .body {
  justify-content: flex-start;
  padding-left: 9px;
  gap: 10px;
}

.icons {
  gap: 6px;
}

.icons svg {
  width: 12px;
  height: 12px;
  fill: none;
  stroke: #444;
}

.icons svg.i8 {
  width: 8px;
  height: 8px;
  stroke: none;
}

.icons .boxed {
  width: 17px;
  height: 17px;
  margin: 0 -3px 0 -2px;
  padding: 2px;
  border: 1px solid #777;
  border-radius: 3px;
  background: #e8e8e8;
}

.icons .blue {
  stroke: #2b8bd6;
}

.wrap-col {
  padding-left: 7px;
  border-left: 1px solid #ccc;
}

.wrap-col button {
  display: flex;
  align-items: center;
  gap: 3px;
  height: 19px;
}

.wrap-col .push {
  margin-left: 10px;
}

.nums {
  gap: 7px;
  padding-left: 4px;
}

.nums .i12 + .i12 {
  margin-left: -1px;
}

.sym {
  font-size: 12px;
  color: #555;
}

.zeros {
  font-size: 7px;
  color: #666;
}

.g-style .body {
  gap: 3px;
}

.g-cell .body {
  gap: 5px;
}

.g-edit .body {
  gap: 3px;
}

.g-edit .lines {
  width: 80px;
}

.collapse {
  align-self: flex-end;
  margin: 0 4px 4px auto;
}

.collapse svg {
  display: block;
  width: 11px;
  height: 11px;
}

/* Formula bar */
.formula {
  display: flex;
  height: 73px;
  margin: 0 5px 5px 4px;
}

.name-box {
  flex: none;
  width: 71px;
  height: 16px;
  padding: 0 5px;
  border: none;
  font-size: 9px;
}

.dots {
  flex: none;
  width: 15px;
  font-size: 10px;
  line-height: 16px;
  text-align: center;
}

.fx {
  flex: none;
  display: flex;
  align-items: center;
  gap: 7px;
  width: 52px;
  height: 16px;
  margin-right: 4px;
  padding-left: 5px;
  border-radius: 2px;
  background: #fff;
}

.fx svg {
  width: 9px;
  height: 9px;
  fill: none;
  stroke: #b5b5b5;
}

.fx em {
  font: italic bold 12px/14px "Liberation Serif", serif;
}

.entry {
  flex: 1;
  min-width: 0;
  display: flex;
  border-radius: 3px;
  background: #fff;
}

.entry textarea {
  flex: 1;
  padding: 4px;
  resize: none;
}

/* Sheet */
.sheet {
  flex: 1;
  min-height: 0;
  display: flex;
}

.sheet-view {
  position: relative;
  flex: 1;
  overflow: hidden;
  background: #fff;
}

#grid {
  width: 1386px;
  table-layout: fixed;
  border-spacing: 0;
  font-family: Lato, sans-serif;
  font-size: 9px;
  line-height: 11px;
  color: #1c1c1c;
}

#grid .c-head { width: 17px; }
#grid .c-a { width: 220px; }
#grid .c-even { width: 68px; }
#grid .c-odd { width: 67px; }
#grid .c-even:last-child { width: 69px; }

#grid th,
#grid td {
  height: 12px;
  padding: 0 2px;
  border-right: 1px solid #e1e1e1;
  border-bottom: 1px solid #e1e1e1;
  font-weight: normal;
  text-align: right;
  white-space: nowrap;
  overflow: hidden;
}

#grid th {
  background: #f0f0f0;
  color: #555;
  padding: 0;
}

#grid thead th {
  height: 15px;
  text-align: center;
  border-bottom-color: #ccc;
}

#grid thead th.sel {
  background: #dcdcdc;
  border-bottom: 2px solid #217346;
  color: #217346;
}

#grid tbody th {
  text-align: center;
}

#grid tbody th.sel {
  background: #dcdcdc;
  color: #217346;
  border-right: 2px solid #217346;
}

#grid td.name {
  text-align: left;
  border-right: 1px solid #888;
}

#grid .green { background: #e2efda; border-bottom-color: #e2efda; }
#grid .yellow { background: #ff0; border-bottom-color: #ff0; }

#grid .titles th,
#grid .titles td {
  height: 70px;
  padding: 0;
  vertical-align: bottom;
  border-bottom: none;
}

#grid .titles div {
  display: flex;
  align-items: center;
  justify-content: center;
  height: 70px;
  font-size: 10px;
  line-height: 14px;
  text-align: center;
  white-space: pre-line;
  overflow: hidden;
}

#grid .type td {
  background: #d9e1f2;
  border-color: #d9e1f2;
}

#grid .value td {
  background: #fce4d6;
  border-color: #fce4d6;
  border-bottom-color: #b5aba5;
}

#grid .type td.name,
#grid .value td.name {
  border-right-color: #888;
}

#grid .type td.name {
  background: linear-gradient(225deg, #d22 4px, #d9e1f2 4px);
}

#grid td.active {
  position: relative;
  outline: 2px solid #217346;
  outline-offset: -1px;
  overflow: visible;
}

#grid td.active::after {
  content: "";
  position: absolute;
  right: -3px;
  bottom: -3px;
  width: 4px;
  height: 4px;
  border: 1px solid #fff;
  border-width: 1px 0 0 1px;
  background: #217346;
}

.cursor {
  position: absolute;
  left: 1034px;
  top: 394px;
  width: 12px;
  height: 12px;
}

.vscroll {
  display: flex;
  flex-direction: column;
  align-items: center;
  width: 14px;
  padding: 4px 0 3px;
  background: #f0f0f0;
}

.up,
.down {
  border: 3px solid transparent;
}

.up {
  border-top: none;
  border-bottom: 5px solid #666;
}

.down {
  border-bottom: none;
  border-top: 5px solid #666;
  margin-top: 3px;
}

.vthumb {
  width: 6px;
  height: 206px;
  margin-top: auto;
  border-radius: 3px;
  background: #666;
}

.sheet-tabs {
  display: flex;
  align-items: center;
  height: 23px;
}

.sheet-tabs .first {
  margin: 0 11px 0 15px;
}

.sheet-tab {
  align-self: flex-start;
  height: 19px;
  margin-left: 31px;
  padding: 0 6px;
  border-radius: 0 0 3px 3px;
  background: #fff;
  font-size: 9px;
  font-weight: 600;
}

.sheet-tab span {
  display: block;
  border-bottom: 2px solid #217346;
  line-height: 14px;
}

.add-sheet {
  margin-left: 34px;
  font-size: 14px;
  line-height: 20px;
}

.hscroll {
  display: flex;
  align-items: center;
  width: 502px;
  height: 12px;
  margin: 0 14px 1px auto;
  padding-right: 3px;
  border-radius: 6px;
  background: #f5f5f5;
}

.hthumb {
  width: 155px;
  height: 6px;
  border-radius: 3px;
  background: #666;
}

.right {
  margin-left: auto;
  border: 3px solid transparent;
  border-left: 5px solid #666;
  border-right: none;
}

.status {
  display: flex;
  align-items: center;
  height: 16px;
  padding: 0 5px 0 7px;
  background: #f5f5f5;
  border-bottom: 1px solid #bdbdbd;
}

.status .ready {
  width: 49px;
}

.status > .i12 {
  margin-right: 1px;
}

.views {
  display: flex;
  margin-left: auto;
}

.views button {
  display: flex;
  align-items: center;
  justify-content: center;
  width: 28px;
  height: 15px;
}

.views .on {
  background: #e1e1e1;
}

.views svg {
  width: 10px;
  height: 10px;
  fill: none;
  stroke: #333;
}

.status .sign {
  width: 14px;
  font-size: 10px;
  line-height: 12px;
  color: #666;
  text-align: center;
}

.status input {
  appearance: none;
  width: 70px;
  height: 1px;
  margin: 0;
  background: #888;
}

.status input::-webkit-slider-thumb {
  appearance: none;
  width: 4px;
  height: 8px;
  background: #555;
}

.status .pct {
  width: 23px;
  text-align: right;
}

/* Taskbar */
.taskbar {
  display: flex;
  align-items: center;
  height: 32px;
  padding: 0 13px 0 14px;
  background: #dadada;
}

.start {
  width: 16px;
  height: 16px;
}

.tb-search {
  display: flex;
  align-items: center;
  width: 153px;
  height: 21px;
  margin: 0 2px 0 10px;
  padding: 0 2px 0 7px;
  border-radius: 11px;
  background: #f3f3f3;
  font-size: 9px;
}

.tb-search svg {
  width: 11px;
  height: 11px;
  fill: none;
  stroke: #333;
  stroke-width: 1.2;
}

.tb-search input {
  flex: 1;
  min-width: 0;
  padding-left: 7px;
}

.tb-search .castle {
  width: 36px;
  height: 19px;
  stroke: none;
}

.apps-row {
  display: flex;
  margin: 0;
  padding: 0;
  list-style: none;
}

.apps-row li {
  position: relative;
  display: flex;
  align-items: center;
  justify-content: center;
  width: 31px;
  height: 32px;
}

.apps-row svg {
  width: 17px;
  height: 17px;
}

.apps-row .run::after {
  content: "";
  position: absolute;
  bottom: 2px;
  width: 5px;
  height: 2px;
  border-radius: 1px;
  background: #888;
}

.apps-row .on {
  background: linear-gradient(#f3f3f3, #f3f3f3) center / 27px 26px no-repeat;
}

.apps-row .on::after {
  width: 11px;
  background: #1372c4;
}

.tag {
  font: bold 7px "Open Sans", sans-serif;
  fill: #fff;
}

.weather {
  display: flex;
  align-items: center;
  gap: 4px;
  margin-left: auto;
  line-height: 11px;
}

.weather span {
  color: #555;
}

.weather svg {
  width: 17px;
  height: 17px;
}

.tray {
  display: flex;
  align-items: center;
  gap: 6px;
  margin-left: 41px;
  line-height: 11px;
}

.tray p {
  text-align: center;
  margin: 0 6px;
}

.tray .clock {
  text-align: right;
  margin: 0 0 0 6px;
}

.tray svg {
  width: 12px;
  height: 12px;
  fill: none;
  stroke: #333;
}

.tray svg:first-child {
  margin-right: 6px;
}

.share-notice {
  position: absolute;
  left: 500px;
  bottom: 38px;
  display: flex;
  align-items: center;
  gap: 8px;
  width: 350px;
  height: 35px;
  padding: 0 7px;
  background: #fff;
  box-shadow: 0 1px 2px #999;
  white-space: nowrap;
}

.grip {
  width: 4px;
  height: 7px;
  border: 1px solid #bbb;
  border-width: 0 1px;
}

.share-notice button {
  width: 101px;
  height: 27px;
  border-radius: 14px;
  background: #0b57d0;
  color: #fff;
  font-weight: 700;
}

.share-notice a {
  color: #0b6bc0;
  text-decoration: underline;
}

/* Participants */
.people {
  align-self: center;
  display: grid;
  grid-template-columns: 1fr 1fr;
  gap: 12px;
  width: 522px;
}

.tile {
  position: relative;
  display: flex;
  align-items: center;
  justify-content: center;
  height: 340px;
  border-radius: 24px;
  color: #fff;
}

.purple {
  background: radial-gradient(circle, #4a1f94 0%, #431b88 35%, #32126b 100%);
}

.teal {
  background: radial-gradient(circle, #5c7a74 0%, #4c6d68 40%, #2d4a49 100%);
}

.speaking {
  grid-column: 1 / 3;
  border: 4px solid #cbb8ff;
}

.avatar {
  width: 96px;
  height: 96px;
  border-radius: 50%;
  background: #512da8;
  font: 52px/96px Roboto, sans-serif;
  text-align: center;
}

.logo {
  display: flex;
  flex-direction: column;
  align-items: center;
  background: #fff;
  overflow: hidden;
}

.logo svg {
  width: 60px;
  height: 52px;
  margin: 13px 0 8px;
}

.logo small {
  color: #222;
  font: 300 15px/15px Lato, sans-serif;
}

.who {
  position: absolute;
  left: 16px;
  bottom: 16px;
  font: 600 15px/20px Inter, "Open Sans", sans-serif;
  text-shadow: 0 1px 2px rgba(0, 0, 0, 0.6);
}

.speaking .who {
  left: 12px;
  bottom: 12px;
}

.muted {
  position: absolute;
  top: 10px;
  right: 10px;
  display: flex;
  align-items: center;
  justify-content: center;
  width: 28px;
  height: 28px;
  border-radius: 50%;
  background: #37008f;
}

.muted svg {
  width: 18px;
  height: 18px;
  fill: #cbb8ff;
}

/* Call controls */
.controls {
  display: flex;
  align-items: center;
  height: 70px;
  padding: 10px 23px 0 24px;
  color: #fff;
}

.info,
.side-btns {
  flex: 1;
  display: flex;
  align-items: center;
}

.info {
  gap: 12px;
  font: 600 15px Inter, "Open Sans", sans-serif;
}

.info .bar {
  width: 1px;
  height: 16px;
  background: #fff;
}

.center {
  display: flex;
  gap: 8px;
}

.center svg,
.side-btns svg {
  width: 24px;
  height: 24px;
  fill: #e3e3e3;
}

.center button {
  display: flex;
  align-items: center;
  justify-content: center;
  width: 56px;
  height: 48px;
  border-radius: 24px;
  background: #333537;
}

.center .hand svg {
  width: 22px;
  height: 22px;
}

.center .more {
  width: 36px;
  border-radius: 18px;
}

.center .hangup {
  width: 72px;
  background: #dc362e;
}

.center .hangup svg {
  fill: #fff;
}

.split {
  display: flex;
  width: 88px;
  border-radius: 24px;
  background: #28292a;
}

.center .split .opt {
  width: 40px;
  padding-left: 6px;
  background: none;
}

.center .split .main {
  width: 48px;
}

.center .mic .opt svg {
  width: 18px;
  height: 18px;
  fill: #a8c7fa;
}

.split.cam {
  border-radius: 12px;
  background: #601410;
}

.center .cam .main {
  border-radius: 12px;
  background: #f9dedc;
}

.side-btns {
  justify-content: flex-end;
  gap: 24px;
}

.side-btns button {
  position: relative;
  width: 24px;
  height: 24px;
}

.side-btns svg {
  fill: #fff;
}

.badge {
  position: absolute;
  left: 13px;
  top: -22px;
  width: 22px;
  border-radius: 50%;
  background: #5f6368;
  font-size: 12px;
  font-weight: 700;
  line-height: 20px;
  text-align: center;
}
```

FILE: script.js
```js
const letters = 'BCDEFGHIJKLMNOPQR'.split('');

const titles = {
  B: 'acueducto y\nalcantarillado',
  C: 'amortización\nde activos\nintangibles',
  D: 'amortización\nde seguros',
  E: 'arrendamient\no de bienes\ninmuebles',
  F: 'arrendamient\no de bienes\nmuebles',
  G: 'combustibles\ny lubricantes',
  H: 'comisiones',
  I: 'comunicacion\nes y\ntransporte',
  J: 'cuota de\nfiscalización y\nauditale',
  K: 'deprecación\nequipo de\ncomedor,\ncocina,\ndespensa y\nhotelería',
  L: 'depreciación\nde edificio',
  M: 'depreciación\nde equipo de\ncomunicación\ny computo',
  N: 'depreciación\nde equipo\nmédico y\ncientífico',
  O: 'depreciación\nde maquinaria\ny equipo',
  P: 'depreciación\nde mubles y\nenceres',
  Q: 'depreciación\nde redes\nlíneas y cables',
  R: 'depreciación\nequipo de\ntransporte'
};

// [name, fill], starting at row 40
const rows = [
  ['Cirugia general', 'green'],
  ['Cirugia de ortopedia', ''],
  ['Cirugia gineco obstétrica', ''],
  ['Cirugia especializada', ''],
  ['Puestos de salud y actividades extramurales', 'yellow'],
  ['Atenciones a terceros', ''],
  ['Sala de procedimientos ambulatorios', ''],
  ['Atención del parto (sala de partos)', 'green'],
  ['Laboratorio clínico', 'green'],
  ['Imágenes diagnósticas Rayos X', 'green'],
  ['Imágenes diagnósticas Ultrasonido', ''],
  ['TAC', ''],
  ['Terapia respiratoria', 'green'],
  ['Fisioterapia', 'green'],
  ['Central de Esterilización', 'green'],
  ['Servicio farmacéutico', 'green'],
  ['Transporte asistencial básico (ambulancia)', 'green'],
  ['Transporte asistencial medicalizada (ambulancia)', ''],
  ['Sala de Transicion - Morgue', 'yellow'],
  ['Servicio de alimentación', 'yellow'],
  ['Servicio de lavandería', 'yellow'],
  ['servicios de apoyo (aseo, mantenimiento, vigilancia)', 'yellow'],
  ['Servicios de aseo y lavandería', 'yellow'],
  ['Servicio de vigilancia', 'yellow'],
  ['Servicio de aseo', 'yellow'],
  ['Servicio de mantenimiento', 'yellow'],
  ['Servicio de transporte', 'yellow'],
  ['Administración', 'yellow'],
  ['Programas', 'yellow'],
  ['', ''],
  ['', '']
];

const values = { B2: '2', G2: '2', M2: '2', B3: '8000000', G3: '500000', M3: '1000000', G56: '500000' };

function cells(n) {
  return letters.map(l => {
    const active = l + n === 'N47' ? ' class="active"' : '';
    return `<td${active}>${values[l + n] || ''}</td>`;
  }).join('');
}

let html = '<colgroup><col class="c-head"><col class="c-a">';
letters.forEach((l, i) => {
  html += `<col class="${i % 2 ? 'c-odd' : 'c-even'}">`;
});
html += '</colgroup><thead><tr><th></th><th>A</th>';
letters.forEach(l => {
  html += `<th${l === 'N' ? ' class="sel"' : ''}>${l}</th>`;
});
html += '</tr></thead><tbody><tr class="titles"><th>1</th><td class="name"></td>';
letters.forEach(l => {
  html += `<td><div>${titles[l]}</div></td>`;
});
html += '</tr>';
html += `<tr class="type"><th>2</th><td class="name">Tipo de Distribución</td>${cells(2)}</tr>`;
html += `<tr class="value"><th>3</th><td class="name">Valor General</td>${cells(3)}</tr>`;
rows.forEach((row, i) => {
  const n = 40 + i;
  html += `<tr><th${n === 47 ? ' class="sel"' : ''}>${n}</th><td class="name ${row[1]}">${row[0]}</td>${cells(n)}</tr>`;
});
html += '</tbody>';

document.getElementById('grid').innerHTML = html;
```
